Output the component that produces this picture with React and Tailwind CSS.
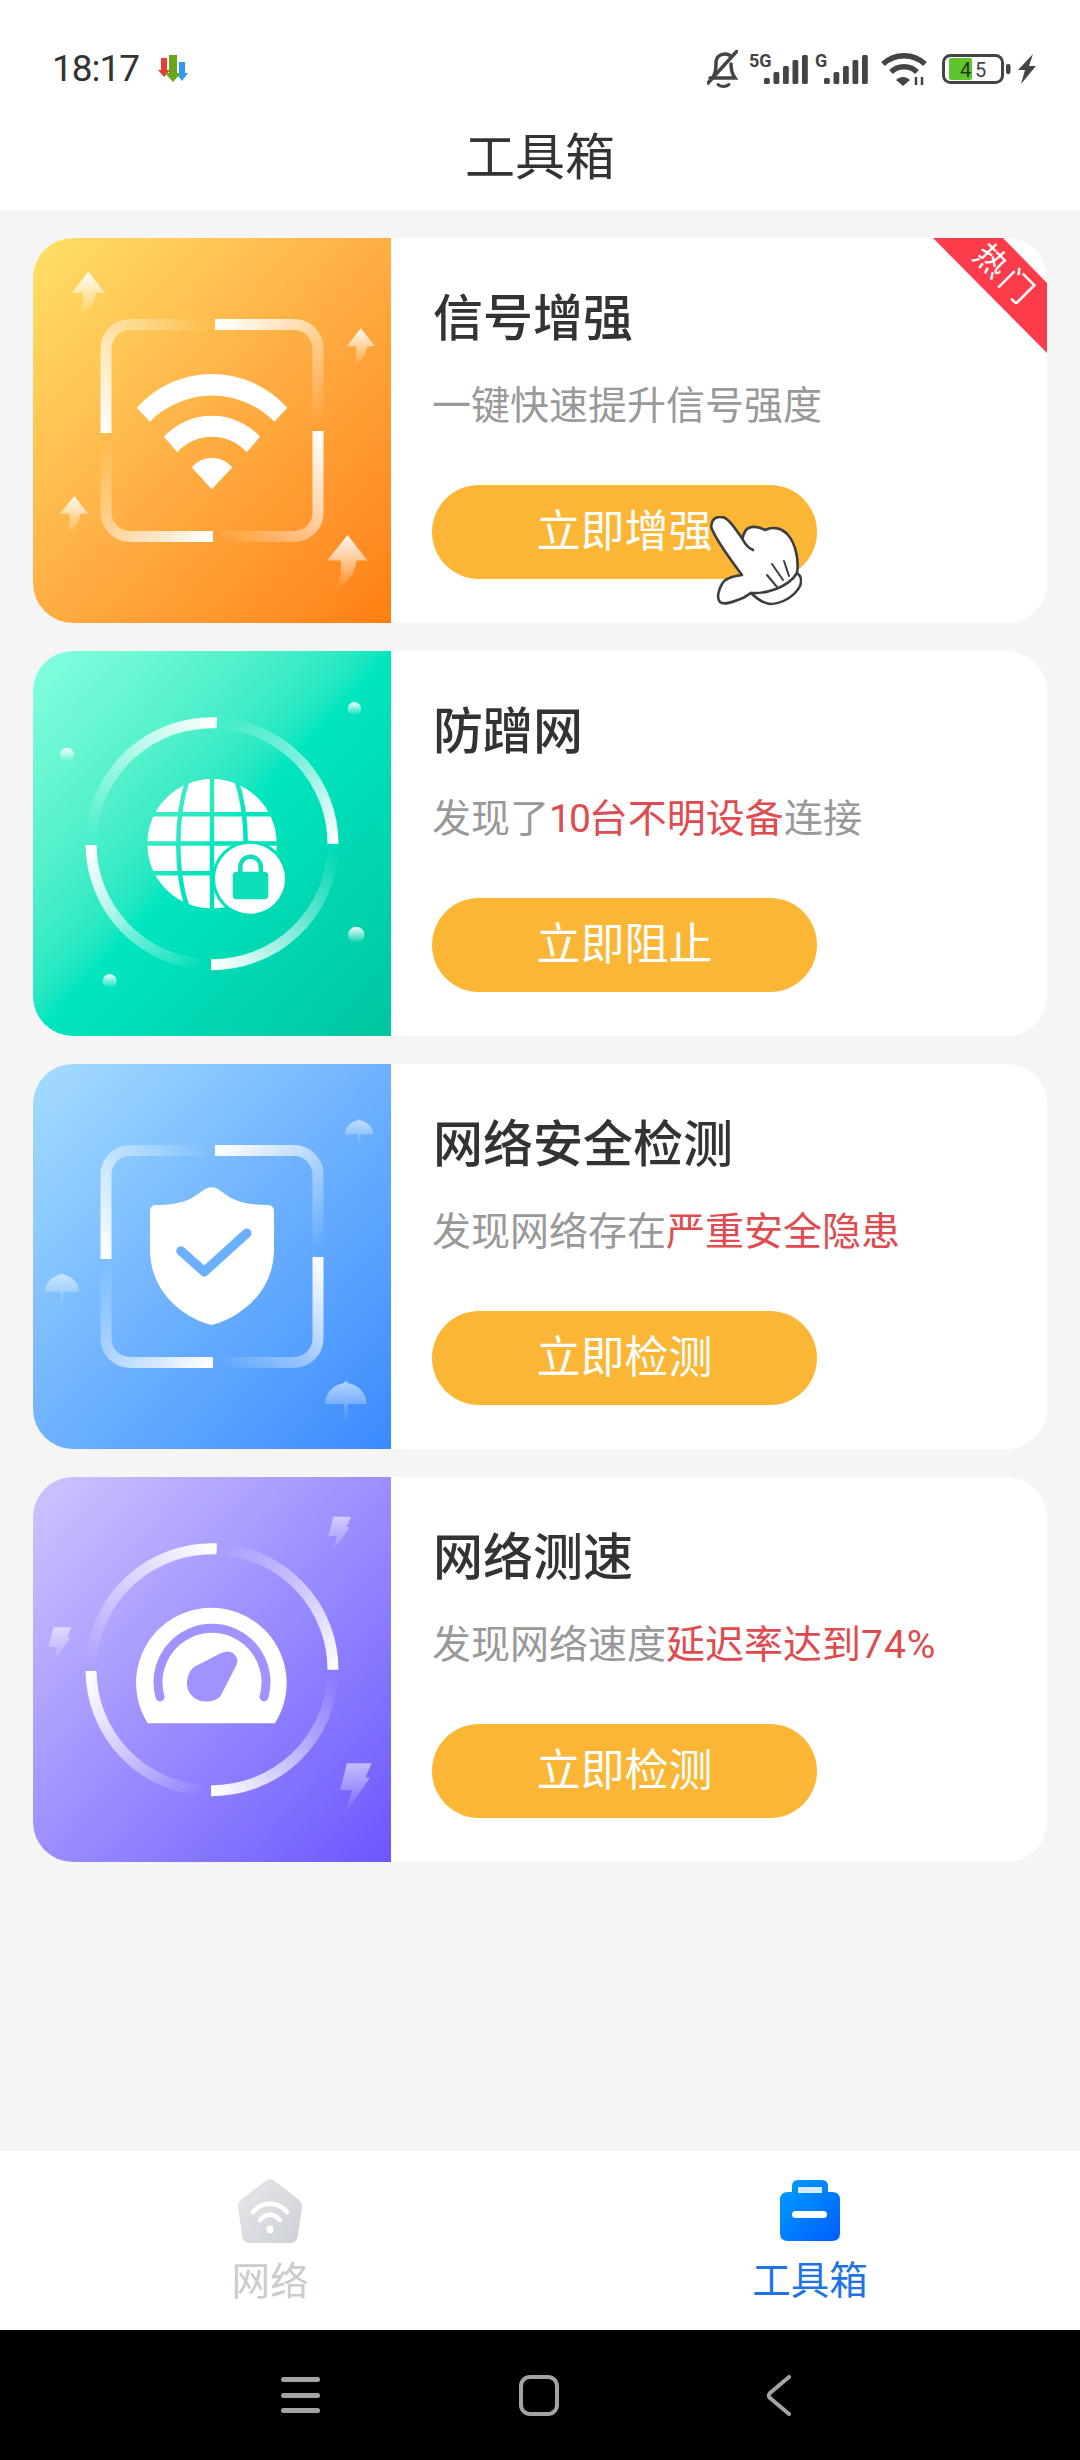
const cjk = "font-['Roboto','Noto_Sans_CJK_SC',sans-serif]";

function Fade({ id, x1, y1, x2, y2 }) {
  return (
    <linearGradient id={id} gradientUnits="userSpaceOnUse" x1={x1} y1={y1} x2={x2} y2={y2}>
      <stop offset="0" stopColor="#fff" />
      <stop offset="1" stopColor="#fff" stopOpacity="0" />
    </linearGradient>
  );
}

function SoftDefs({ id }) {
  return (
    <linearGradient id={id} x1="0" y1="0" x2="0" y2="1">
      <stop offset="0" stopColor="#fff" stopOpacity="0.95" />
      <stop offset="1" stopColor="#fff" stopOpacity="0" />
    </linearGradient>
  );
}

// square frame made of four fading strokes
function Frame({ id }) {
  return (
    <g fill="none" strokeWidth="11">
      <defs>
        <Fade id={id + "a"} x1="182" y1="86" x2="285" y2="187" />
        <Fade id={id + "b"} x1="285" y1="193" x2="184" y2="298" />
        <Fade id={id + "c"} x1="180" y1="298" x2="73" y2="200" />
        <Fade id={id + "d"} x1="73" y1="195" x2="177" y2="86" />
      </defs>
      <path stroke={`url(#${id}a)`} d="M182 86.5H261A24 24 0 0 1 285 110.5V187" />
      <path stroke={`url(#${id}b)`} d="M285 193V274.5A24 24 0 0 1 261 298.5H184" />
      <path stroke={`url(#${id}c)`} d="M180 298.5H97A24 24 0 0 1 73 274.5V200" />
      <path stroke={`url(#${id}d)`} d="M73 195V110.5A24 24 0 0 1 97 86.5H177" />
    </g>
  );
}

// round version of the same thing
function Ring({ id }) {
  return (
    <g fill="none" strokeWidth="11">
      <defs>
        <Fade id={id + "a"} x1="184" y1="72" x2="58" y2="188" />
        <Fade id={id + "b"} x1="300" y1="192" x2="186" y2="72" />
        <Fade id={id + "c"} x1="178" y1="314" x2="300" y2="198" />
        <Fade id={id + "d"} x1="58" y1="194" x2="172" y2="314" />
      </defs>
      <path stroke={`url(#${id}a)`} d="M183.7 71.8A121 121 0 0 0 58 188" />
      <path stroke={`url(#${id}b)`} d="M186 72A121 121 0 0 1 300 192.7" />
      <path stroke={`url(#${id}c)`} d="M178 313.7A121 121 0 0 0 300 198" />
      <path stroke={`url(#${id}d)`} d="M58 194A121 121 0 0 0 172 313.5" />
    </g>
  );
}

function Art({ children }) {
  return (
    <svg viewBox="0 0 358 385" className="absolute inset-0 h-full w-full">
      {children}
    </svg>
  );
}

function SignalArt() {
  const arrows = [
    [38.7, 33.7, 0.333],
    [313.7, 90.3, 0.283],
    [27, 258, 0.283],
    [294.3, 297, 0.403],
  ];
  return (
    <Art>
      <defs>
        <SoftDefs id="arrowFade" />
      </defs>
      {arrows.map(([x, y, s]) => (
        <path
          key={x}
          transform={`translate(${x} ${y}) scale(${s})`}
          fill="url(#arrowFade)"
          d="M50 0L100 63H72C70 95 50 120 20 135C35 110 35 85 33 63H0Z"
        />
      ))}
      <Frame id="fa" />
      <g fill="#fff">
        <path d="M103.7 169.7A101 101 0 0 1 254.3 169.7L241.3 183.7A87 87 0 0 0 117 183.7Z" />
        <path d="M131 198.7A65.4 65.4 0 0 1 227 198.7L213.7 214.3A46.4 46.4 0 0 0 144.3 214.3Z" />
        <path d="M158.7 229.3A26.3 26.3 0 0 1 199.3 229.3L178.7 251.3Z" />
      </g>
    </Art>
  );
}

function GlobeArt() {
  const dots = [
    [321.3, 57.7, 6.7],
    [34, 103.7, 7],
    [323.3, 284, 8.3],
    [76.7, 330, 7],
  ];
  return (
    <Art>
      <defs>
        <SoftDefs id="dotFade" />
        <mask id="globeCut">
          <rect width="358" height="385" fill="#fff" />
          <g fill="none" stroke="#000" strokeWidth="4.500">
            <path d="M179 120V262" />
            <path d="M110 163.300H248M110 192.500H248M110 222.300H248" />
            <path d="M155 128C142 165 142 222 155 258" />
            <path d="M203 128C216 165 216 222 203 258" />
          </g>
          <circle cx="217" cy="227.700" r="38" fill="#000" />
        </mask>
      </defs>
      {dots.map(([x, y, r]) => (
        <circle key={x} cx={x} cy={y} r={r} fill="url(#dotFade)" />
      ))}
      <Ring id="rb" />
      <circle cx="179" cy="192.700" r="64.700" fill="#fff" mask="url(#globeCut)" />
      <circle cx="217" cy="227.700" r="35" fill="#fff" />
      <rect x="199.700" y="220.700" width="35.600" height="27.600" rx="4" fill="#0fdfb9" />
      <path d="M207.300 221V216a10.250 10.250 0 0 1 20.500 0V221" fill="none" stroke="#0fdfb9" strokeWidth="4.500" />
    </Art>
  );
}

function ShieldArt() {
  const umbrellas = [
    [312, 55, 0.283],
    [12, 209, 0.34],
    [292, 317, 0.417],
  ];
  return (
    <Art>
      <defs>
        <linearGradient id="umbFade" x1="0" y1="0" x2="0" y2="1">
          <stop offset="0" stopColor="#fff" stopOpacity="0.6" />
          <stop offset="1" stopColor="#fff" stopOpacity="0" />
        </linearGradient>
      </defs>
      {umbrellas.map(([x, y, s]) => (
        <path
          key={x}
          transform={`translate(${x} ${y}) scale(${s})`}
          fill="url(#umbFade)"
          d="M0 55C0 27 22 9 45 5L50 0L55 5C78 9 100 27 100 55ZM46 55H54V85C54 100 33 100 30 87H36C38 92 46 92 46 85Z"
        />
      ))}
      <Frame id="fc" />
      <path
        fill="#fff"
        d="M178.700 123.300C172 123.300 170 127 163 131.500C152 139 138 141 123 141C119.500 141 117 143.500 117 147L117 185C117 235 160 257 178.700 261C197 257 241 235 241 185L241 147C241 143.500 238.500 141 235 141C220 141 205 139 194 131.500C187 127 185 123.300 178.700 123.300Z"
      />
      <path
        fill="none"
        stroke="#6ab0ff"
        strokeWidth="9.500"
        strokeLinecap="round"
        strokeLinejoin="round"
        d="M148 187L171.300 207.700L213.700 169.300"
      />
    </Art>
  );
}

function SpeedArt() {
  const bolts = [
    [295.300, 39.700, 0.227],
    [15.300, 150.300, 0.233],
    [307, 286.300, 0.317],
  ];
  return (
    <Art>
      <defs>
        <linearGradient id="boltFade" x1="0" y1="0" x2="0" y2="1">
          <stop offset="0" stopColor="#fff" stopOpacity="0.55" />
          <stop offset="1" stopColor="#fff" stopOpacity="0" />
        </linearGradient>
      </defs>
      {bolts.map(([x, y, s]) => (
        <path
          key={x}
          transform={`translate(${x} ${y}) scale(${s})`}
          fill="url(#boltFade)"
          d="M22 0H100L80 45H95L15 160L38 85H0Z"
        />
      ))}
      <Ring id="rd" />
      <path fill="#fff" d="M114.700 246.300A75.300 75.300 0 1 1 242 246.300Z" />
      <path
        fill="none"
        stroke="#a092ff"
        strokeWidth="9"
        strokeLinecap="round"
        d="M127 219.900A54 54 0 1 1 231 219.900"
      />
      <path
        fill="#a092ff"
        d="M162 189.500L188 176Q197 172 202 178Q206 183 203 189L187 220Q180 225 172 224.500C160 224 153 214 154 204Q155 194 162 189.500Z"
      />
    </Art>
  );
}

function Hand() {
  return (
    <svg
      viewBox="0 0 92 90"
      className="absolute left-[677px] top-[278px] h-[90px] w-[92px]"
      fill="none"
      stroke="#3e3e3e"
      strokeWidth="2.600"
      strokeLinecap="round"
      strokeLinejoin="round"
    >
      <path
        fill="#fff"
        d="M9.500 1C4 1 .5 6 1.500 12C8 28 22 45 32 59C24 60 15 62 12 68C9 73 6 82 10 86C15 90 27 84 33 82C37 80 39 78 41 77C46 82 52 87 60 88C72 88 85 80 90 70C92 65 91 60 87 57C89 45 86 28 78 19C72 12 63 10 55 14C48 10 40 10 37 13C34 16 33 20 32.500 23C26 14 20 4 15 2C13 1 11 1 9.500 1Z"
      />
      <path d="M32.500 23C35 28 38 32 43 34M41 77C55 78 78 72 87 57" />
      <path d="M57 59L67 71M62 48L73 64M74 45L79 60" strokeWidth="2" />
    </svg>
  );
}

function Card({ art: ArtPiece, title, button, gradient, hot, children }) {
  return (
    <div className="relative h-[385px]">
      <div className="relative flex h-full overflow-hidden rounded-[40px] bg-white">
        <div className={`relative h-full w-[358px] shrink-0 ${gradient}`}>
          <ArtPiece />
        </div>
        <div className="flex flex-col pl-[41px] pt-[51px]">
          <div className="h-[60px] pl-[1px] text-[50px] font-medium leading-[60px] text-[#333]">{title}</div>
          <div className="mt-[32px] h-[50px] whitespace-nowrap text-[39px] leading-[50px] text-[#999]">{children}</div>
          <button className="mt-[54px] h-[94px] w-[385px] rounded-full bg-[#fbb636] text-[44px] text-white">
            {button}
          </button>
        </div>
        {hot && (
          <div className="absolute right-0 top-0 h-[115px] w-[114px] bg-[#fe3b4b] [clip-path:polygon(0_0,70px_0,100%_45px,100%_100%)]" />
        )}
      </div>
      {hot && (
        <>
          <div className="absolute right-[6px] top-[21px] rotate-45 text-[32px] leading-[32px] tracking-[4px] text-white">
            热门
          </div>
          <Hand />
        </>
      )}
    </div>
  );
}

function Bars({ x }) {
  const bars = [6, 12, 18, 24, 29];
  return bars.map((h, i) => (
    <rect key={i} x={x + i * 9.5} y={33 - h} width="5.800" height={h} rx="1.500" fill="#444" />
  ));
}

function NetworkBars({ label, barsAt, width, className }) {
  return (
    <div className={`relative h-[36px] ${className}`} style={{ width }}>
      <svg width={width} height="36" viewBox={`0 0 ${width} 36`}>
        <Bars x={barsAt} />
      </svg>
      <span className="absolute left-0 top-[2px] text-[18px] font-bold leading-[16px] text-[#444] font-['Roboto',sans-serif]">
        {label}
      </span>
    </div>
  );
}

function StatusBar() {
  return (
    <div className="flex h-[38px] items-center justify-between pl-[52px] pr-[44px]">
      <div className="flex items-center">
        <span className="text-[37px] font-normal leading-[38px] tracking-[-1px] text-[#333] font-['Roboto',sans-serif]">
          18:17
        </span>
        <svg width="33" height="33" viewBox="0 0 33 33" className="ml-[19px]">
          <path fill="#e53f35" d="M3 5h6v12h3l-6 7l-6-7h3z" />
          <path fill="#2f9bf0" d="M21 9h6v11h3l-6 8l-6-8h3z" />
          <path fill="#6aa61a" d="M11 2h8v18h4l-8 9l-8-9h4z" />
        </svg>
      </div>
      <div className="flex items-center">
        <svg width="31" height="38" viewBox="0 0 31 38" fill="none" stroke="#444" strokeWidth="3.500" strokeLinecap="round">
          <path d="M6 27C9 23 9 18 9 13C9 7 13 4 18 4C21 4 23 5 24 7M24 14C24 19 25 24 28 28H3" />
          <path d="M30 1L1 33" />
          <path d="M11 34.500C13 37 19 37 22 34.500" strokeWidth="3" />
        </svg>
        <NetworkBars label="5G" barsAt={15} width={59} className="ml-[11px]" />
        <NetworkBars label="G" barsAt={9} width={53} className="ml-[7px]" />
        <svg width="46" height="34" viewBox="0 0 46 34" className="ml-[13px]" fill="none" stroke="#444" strokeWidth="5.500">
          <path d="M2 12C14 1 32 1 44 12" />
          <path d="M10 20C17 13 29 13 36 20" />
          <path d="M15 28L22 34L29 28C25 24 19 24 15 28Z" fill="#444" strokeWidth="0" />
          <path d="M35 25v8M41 25v8" strokeWidth="2.500" />
        </svg>
        <svg width="69" height="30" viewBox="0 0 69 30" className="ml-[15px]">
          <rect x="1.500" y="1.500" width="59" height="27" rx="7" fill="none" stroke="#444" strokeWidth="3" />
          <rect x="7" y="4" width="23" height="22" rx="2" fill="#5fc42d" />
          <rect x="64" y="10" width="4.500" height="10" rx="2" fill="#444" />
          <text x="18" y="23" fontSize="20" fill="#1f3a10" fontFamily="Roboto, sans-serif">4</text>
          <text x="33" y="23" fontSize="20" fill="#444" fontFamily="Roboto, sans-serif">5</text>
        </svg>
        <svg width="18" height="30" viewBox="0 0 18 30" className="ml-[7px]">
          <path fill="#444" d="M15 0L11 12H18L3 30L7 16H0Z" />
        </svg>
      </div>
    </div>
  );
}

function BottomNav() {
  return (
    <div className="grid h-[181px] shrink-0 grid-cols-2 border-t border-[#eee] bg-white">
      <div className="flex flex-col items-center pt-[29px]">
        <svg width="64" height="64" viewBox="0 0 64 64">
          <defs>
            <linearGradient id="navGray" x1="0" y1="0" x2="1" y2="1">
              <stop offset="0" stopColor="#e6e7ea" />
              <stop offset="1" stopColor="#cdd1d6" />
            </linearGradient>
          </defs>
          <path
            fill="url(#navGray)"
            d="M28 1.500Q32 -1 36 1.500L60 20Q64 23 64 28L60 56Q59 64 52 64H12Q5 64 4 56L0 28Q0 23 4 20Z"
          />
          <g fill="none" stroke="#fff" strokeWidth="4.500" strokeLinecap="round">
            <path d="M15 33C24 22 40 22 49 33" />
            <path d="M22 41C28 34 36 34 42 41" />
          </g>
          <ellipse cx="32" cy="50.500" rx="3.500" ry="4" fill="#fff" />
        </svg>
        <span className={`mt-[14px] text-[38.500px] leading-[50px] text-[#ccc] ${cjk}`}>网络</span>
      </div>
      <div className="flex flex-col items-center pt-[30px]">
        <svg width="60" height="63" viewBox="0 0 60 63">
          <defs>
            <linearGradient id="navBlue" x1="0" y1="0" x2="1" y2="1">
              <stop offset="0" stopColor="#00a0ff" />
              <stop offset="1" stopColor="#005cff" />
            </linearGradient>
          </defs>
          <path
            fill="url(#navBlue)"
            d="M18 0H42Q48 0 48 6V12H52Q60 12 60 20V53Q60 61 52 61H8Q0 61 0 53V20Q0 12 8 12H12V6Q12 0 18 0Z"
          />
          <rect x="18" y="7" width="24" height="6" fill="#d8ecff" />
          <rect x="12" y="31" width="35" height="7" rx="3.500" fill="#fff" />
        </svg>
        <span className={`mt-[13px] text-[38.500px] leading-[50px] text-[#1f74e4] ${cjk}`}>工具箱</span>
      </div>
    </div>
  );
}

function SystemNav() {
  return (
    <div className="flex h-[130px] shrink-0 items-center bg-black">
      <div className="ml-[281px] flex w-[39px] flex-col gap-[10.500px]">
        <div className="h-[5px] rounded-full bg-[#a3a3a3]" />
        <div className="h-[5px] rounded-full bg-[#a3a3a3]" />
        <div className="h-[5px] rounded-full bg-[#a3a3a3]" />
      </div>
      <div className="ml-[199px] h-[41px] w-[40px] rounded-[11px] border-[4px] border-[#a3a3a3]" />
      <svg width="25" height="41" viewBox="0 0 25 41" className="ml-[207px]" fill="none" stroke="#a3a3a3" strokeWidth="4" strokeLinecap="round" strokeLinejoin="round">
        <path d="M23 2L4 18Q1.500 20.500 4 23L23 39" />
      </svg>
    </div>
  );
}

export default function App() {
  return (
    <div className={`flex h-[2460px] w-[1080px] flex-col bg-[#f5f5f5] ${cjk}`}>
      <div className="h-[210px] shrink-0 bg-white pt-[50px]">
        <StatusBar />
        <div className="mt-[40px] text-center text-[50px] leading-[60px] text-[#333]">工具箱</div>
      </div>

      <div className="flex flex-1 flex-col gap-[28px] px-[33px] pt-[28px]">
        <Card
          art={SignalArt}
          title="信号增强"
          button="立即增强"
          hot
          gradient="bg-linear-to-br from-[#ffe066] via-[#ffae42] to-[#ff7f10]"
        >
          一键快速提升信号强度
        </Card>
        <Card
          art={GlobeArt}
          title="防蹭网"
          button="立即阻止"
          gradient="bg-linear-to-br from-[#85ffdf] via-[#00e6bf] to-[#00c5a0]"
        >
          发现了<span className="text-[#e04b4f]"><span className="tracking-[-2px]">10</span>台不明设备</span>连接
        </Card>
        <Card
          art={ShieldArt}
          title="网络安全检测"
          button="立即检测"
          gradient="bg-linear-to-br from-[#a5dcff] via-[#6eb2ff] to-[#3a8aff]"
        >
          发现网络存在<span className="text-[#e04b4f]">严重安全隐患</span>
        </Card>
        <Card
          art={SpeedArt}
          title="网络测速"
          button="立即检测"
          gradient="bg-linear-to-br from-[#cfc4ff] via-[#9c8eff] to-[#6c55ff]"
        >
          发现网络速度<span className="text-[#e04b4f]">延迟率达到<span className="tracking-[1px]">74%</span></span>
        </Card>
      </div>

      <BottomNav />
      <SystemNav />
    </div>
  );
}
